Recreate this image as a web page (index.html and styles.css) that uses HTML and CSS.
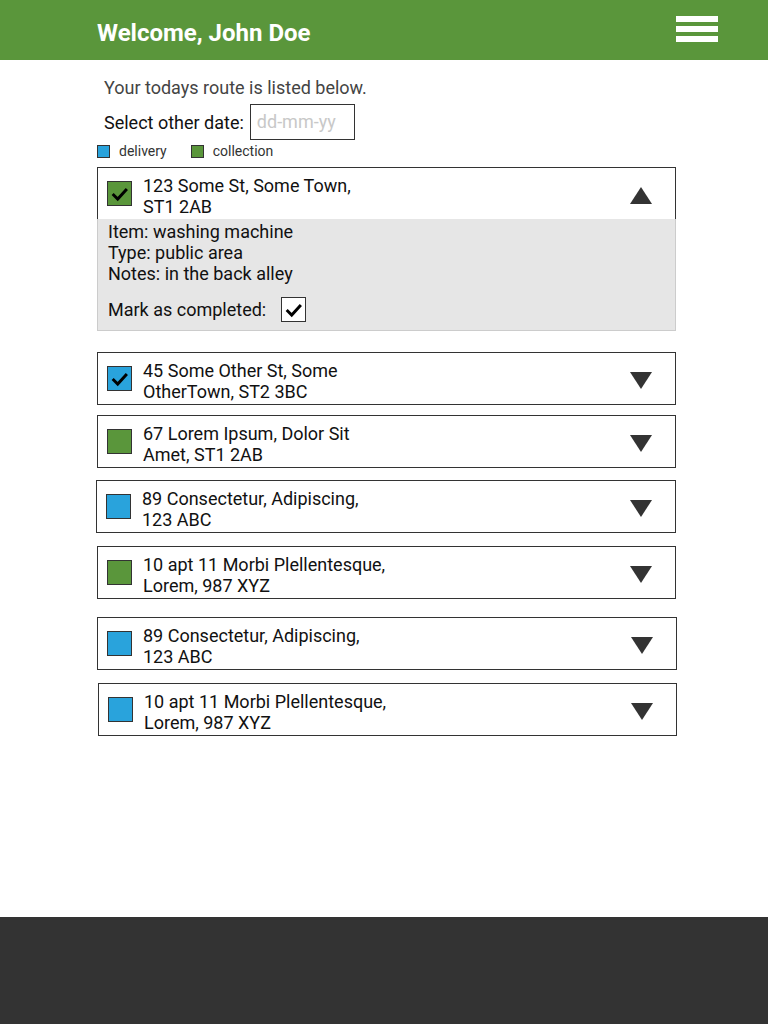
FILE: index.html
```html
<!DOCTYPE html>
<html>
<head>
<meta charset="utf-8">
<link rel="stylesheet" href="styles.css">
</head>
<body>
<div class="page">
  <header class="topbar">
    <h1 class="title">Welcome, John Doe</h1>
    <div class="burger"><span></span><span></span><span></span></div>
  </header>
  <main class="main">
    <p class="intro">Your todays route is listed below.</p>
    <div class="date-row">
      <span class="date-label">Select other date:</span>
      <div class="date-input">dd-mm-yy</div>
    </div>
    <div class="legend">
      <span class="legend-item"><span class="swatch blue"></span>delivery</span>
      <span class="legend-item"><span class="swatch green"></span>collection</span>
    </div>

    <div class="route r1">
      <div class="card">
        <span class="box green"><svg viewBox="0 0 24 24" width="22" height="22"><path d="M4 12 L9.5 17.5 L19.5 6.5" fill="none" stroke="#000" stroke-width="3.2"/></svg></span>
        <span class="addr">123 Some St, Some Town,<br>ST1 2AB</span>
        <span class="tri up"></span>
      </div>
      <div class="details">
        <div>Item: washing machine</div>
        <div>Type: public area</div>
        <div>Notes: in the back alley</div>
        <div class="mark"><span>Mark as completed:</span><span class="box white"><svg viewBox="0 0 24 24" width="22" height="22"><path d="M4 12 L9.5 17.5 L19.5 6.5" fill="none" stroke="#000" stroke-width="3.2"/></svg></span></div>
      </div>
    </div>

    <div class="route r2">
      <div class="card">
        <span class="box blue"><svg viewBox="0 0 24 24" width="22" height="22"><path d="M4 12 L9.5 17.5 L19.5 6.5" fill="none" stroke="#000" stroke-width="3.2"/></svg></span>
        <span class="addr">45 Some Other St, Some<br>OtherTown, ST2 3BC</span>
        <span class="tri"></span>
      </div>
    </div>

    <div class="route r3">
      <div class="card">
        <span class="box green"></span>
        <span class="addr">67 Lorem Ipsum, Dolor Sit<br>Amet, ST1 2AB</span>
        <span class="tri"></span>
      </div>
    </div>

    <div class="route r4">
      <div class="card">
        <span class="box blue"></span>
        <span class="addr">89 Consectetur, Adipiscing,<br>123 ABC</span>
        <span class="tri"></span>
      </div>
    </div>

    <div class="route r5">
      <div class="card">
        <span class="box green"></span>
        <span class="addr">10 apt 11 Morbi Plellentesque,<br>Lorem, 987 XYZ</span>
        <span class="tri"></span>
      </div>
    </div>

    <div class="route r6">
      <div class="card">
        <span class="box blue"></span>
        <span class="addr">89 Consectetur, Adipiscing,<br>123 ABC</span>
        <span class="tri"></span>
      </div>
    </div>

    <div class="route r7">
      <div class="card">
        <span class="box blue"></span>
        <span class="addr">10 apt 11 Morbi Plellentesque,<br>Lorem, 987 XYZ</span>
        <span class="tri"></span>
      </div>
    </div>
  </main>
  <footer class="footer"></footer>
</div>
</body>
</html>
```

FILE: styles.css
```css
* { box-sizing: border-box; }
html, body { margin: 0; padding: 0; }
body {
  font-family: Roboto, "Liberation Sans", sans-serif;
  color: #111;
  background: #fff;
}
.page {
  height: 1024px;
  display: flex;
  flex-direction: column;
}
.topbar {
  height: 60px;
  flex: none;
  background: #5a963b;
  display: flex;
  align-items: center;
  justify-content: space-between;
  padding: 0 50px 0 97px;
}
.title {
  margin: 0;
  color: #fff;
  font-size: 24px;
  font-weight: 700;
  line-height: 1;
  margin-top: 6px;
}
.burger {
  width: 42px;
  display: flex;
  flex-direction: column;
  gap: 4px;
  margin-top: -2px;
}
.burger span {
  display: block;
  height: 6px;
  background: #fff;
}
.main {
  flex: 1;
  padding: 17px 0 0 97px;
  width: 676px;
  box-sizing: content-box;
}
.intro {
  margin: 0 0 0 7px;
  font-size: 18px;
  line-height: 22px;
  color: #444;
}
.date-row {
  display: flex;
  align-items: center;
  margin: 5px 0 0 7px;
}
.date-label {
  font-size: 18px;
  color: #111;
  margin-right: 6px;
}
.date-input {
  width: 105px;
  height: 36px;
  border: 1px solid #333;
  font-size: 18px;
  color: #c8c8c8;
  padding: 6px 0 0 6px;
}
.legend {
  display: flex;
  gap: 24px;
  margin-top: 4px;
  font-size: 14px;
  color: #333;
  height: 14px;
  align-items: center;
}
.legend-item {
  display: flex;
  align-items: center;
}
.swatch {
  width: 13px;
  height: 13px;
  border: 1px solid #333;
  margin-right: 9px;
}
.blue { background: #29a3dc; }
.green { background: #5a963b; }
.white { background: #fff; }
.route { width: 579px; }
.r1 { margin-top: 9px; }
.r2 { margin-top: 21px; }
.r3 { margin-top: 10px; }
.r4 { margin-top: 12px; margin-left: -1px; width: 580px; }
.r5 { margin-top: 13px; }
.r6 { margin-top: 18px; width: 580px; }
.r7 { margin-top: 13px; margin-left: 1px; }
.card {
  height: 53px;
  border: 1px solid #333;
  display: flex;
  align-items: center;
  padding: 0 23px 0 9px;
  background: #fff;
}
.box {
  flex: none;
  width: 25px;
  height: 25px;
  border: 1px solid #333;
  display: flex;
  align-items: center;
  justify-content: center;
}
.addr {
  flex: 1;
  font-size: 18px;
  line-height: 21px;
  margin-left: 11px;
  padding-top: 4px;
}
.tri {
  width: 0;
  height: 0;
  border-left: 11.5px solid transparent;
  border-right: 11.5px solid transparent;
  border-top: 17px solid #333;
  margin-top: 4px;
}
.tri.up {
  border-top: 0;
  border-bottom: 17px solid #333;
  margin-top: 3px;
}
.details {
  margin-top: -1px;
  background: #e6e6e6;
  border: 1px solid #ccc;
  border-top: 0;
  padding: 2px 10px 8px 10px;
  font-size: 18px;
  line-height: 21px;
}
.mark {
  display: flex;
  align-items: center;
  margin-top: 13px;
}
.mark span:first-child { margin-right: 15px; }
.footer {
  flex: none;
  height: 107px;
  background: #333;
}
```
